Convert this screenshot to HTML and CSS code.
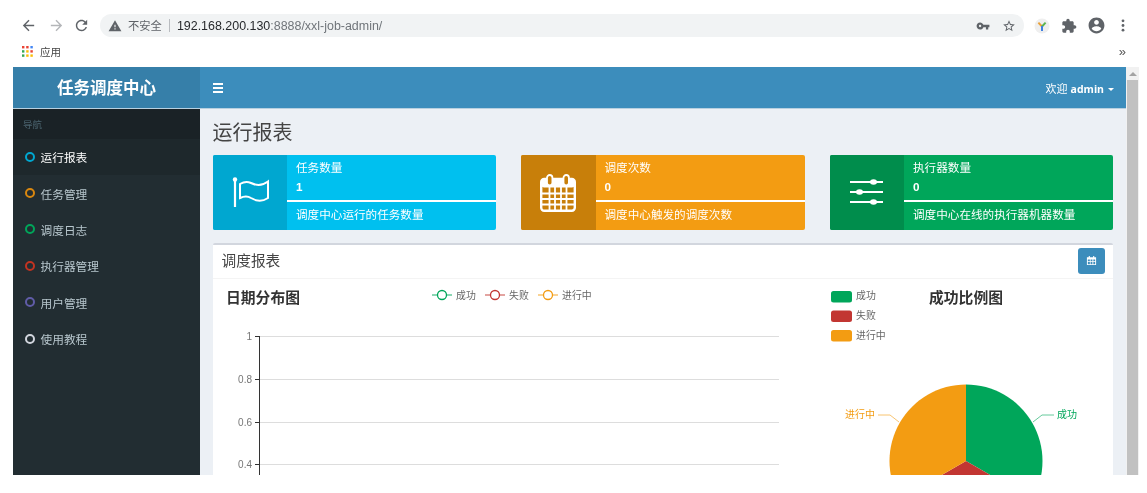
FILE: index.html
```html
<!DOCTYPE html>
<html lang="zh-CN">
<head>
<meta charset="utf-8">
<title>任务调度中心</title>
<link rel="stylesheet" href="styles.css">
</head>
<body>
<div class="browser">
  <div class="toolbar">
    <svg class="tb-icon" viewBox="0 0 24 24"><path fill="#5f6368" d="M20 11H7.83l5.59-5.59L12 4l-8 8 8 8 1.41-1.41L7.83 13H20v-2z"/></svg>
    <svg class="tb-icon" viewBox="0 0 24 24"><path fill="#b4b6b9" d="M12 4l-1.41 1.41L16.17 11H4v2h12.17l-5.58 5.59L12 20l8-8z"/></svg>
    <svg class="tb-icon" viewBox="0 0 24 24"><path fill="#5f6368" d="M17.65 6.35C16.2 4.9 14.21 4 12 4c-4.42 0-7.99 3.58-7.99 8s3.57 8 7.99 8c3.73 0 6.84-2.55 7.73-6h-2.08c-.82 2.33-3.04 4-5.65 4-3.31 0-6-2.69-6-6s2.69-6 6-6c1.66 0 3.14.69 4.22 1.78L13 11h7V4l-2.35 2.35z"/></svg>
    <div class="omnibox">
      <svg class="warn" viewBox="0 0 24 24"><path fill="#5f6368" d="M1 21h22L12 2 1 21zm12-3h-2v-2h2v2zm0-4h-2v-4h2v4z"/></svg>
      <span class="insecure">不安全</span>
      <span class="sep"></span>
      <span class="url"><span class="host">192.168.200.130</span>:8888/xxl-job-admin/</span>
      <span class="omni-actions">
        <svg class="om-icon" viewBox="0 0 24 24"><path fill="#5f6368" d="M12.65 10C11.83 7.67 9.61 6 7 6c-3.31 0-6 2.69-6 6s2.69 6 6 6c2.61 0 4.83-1.67 5.65-4H17v4h4v-4h2v-4H12.65zM7 14c-1.1 0-2-.9-2-2s.9-2 2-2 2 .9 2 2-.9 2-2 2z"/></svg>
        <svg class="om-icon" viewBox="0 0 24 24"><path fill="#5f6368" d="M22 9.24l-7.19-.62L12 2 9.19 8.63 2 9.24l5.46 4.73L5.82 21 12 17.27 18.18 21l-1.63-7.03L22 9.24zM12 15.4l-3.76 2.27 1-4.28-3.32-2.88 4.38-.38L12 6.1l1.71 4.04 4.38.38-3.32 2.88 1 4.28L12 15.4z"/></svg>
      </span>
    </div>
    <div class="extensions">
      <svg class="ext" viewBox="0 0 16 16"><circle cx="8" cy="8" r="7.5" fill="#efefef"/><path d="M8 8.5L4.4 4.6" stroke="#e9a23b" stroke-width="2" fill="none"/><path d="M8 8.5l3.6-3.9" stroke="#5bb450" stroke-width="2" fill="none"/><path d="M8 8v5" stroke="#3f7fe0" stroke-width="2" fill="none"/></svg>
      <svg class="ext" viewBox="0 0 24 24"><path fill="#5f6368" d="M20.5 11H19V7c0-1.1-.9-2-2-2h-4V3.5C13 2.12 11.88 1 10.5 1S8 2.12 8 3.5V5H4c-1.1 0-1.99.9-1.99 2v3.8H3.5c1.49 0 2.7 1.21 2.7 2.7s-1.21 2.7-2.7 2.7H2V20c0 1.1.9 2 2 2h3.8v-1.5c0-1.49 1.21-2.7 2.7-2.7 1.49 0 2.7 1.21 2.7 2.7V22H17c1.1 0 2-.9 2-2v-4h1.5c1.38 0 2.5-1.12 2.5-2.5S21.88 11 20.5 11z"/></svg>
      <svg class="ext profile" viewBox="0 0 24 24"><path fill="#5f6368" d="M12 2C6.48 2 2 6.48 2 12s4.48 10 10 10 10-4.48 10-10S17.52 2 12 2zm0 3c1.66 0 3 1.34 3 3s-1.34 3-3 3-3-1.34-3-3 1.34-3 3-3zm0 14.2c-2.5 0-4.71-1.28-6-3.22.03-1.99 4-3.08 6-3.08 1.99 0 5.97 1.09 6 3.08-1.29 1.94-3.5 3.22-6 3.22z"/></svg>
      <svg class="ext dots" viewBox="0 0 4 13"><circle cx="2" cy="1.800" r="1.400" fill="#5f6368"/><circle cx="2" cy="6.500" r="1.400" fill="#5f6368"/><circle cx="2" cy="11.200" r="1.400" fill="#5f6368"/></svg>
    </div>
  </div>
  <div class="bookmarks">
    <svg class="apps" viewBox="0 0 11 11">
      <rect x="0" y="0" width="2.4" height="2.4" fill="#ea4335"/><rect x="4.2" y="0" width="2.4" height="2.4" fill="#ea4335"/><rect x="8.4" y="0" width="2.4" height="2.4" fill="#4285f4"/>
      <rect x="0" y="4.2" width="2.4" height="2.4" fill="#34a853"/><rect x="4.2" y="4.2" width="2.4" height="2.4" fill="#fbbc05"/><rect x="8.4" y="4.2" width="2.4" height="2.4" fill="#ea4335"/>
      <rect x="0" y="8.4" width="2.4" height="2.4" fill="#34a853"/><rect x="4.2" y="8.4" width="2.4" height="2.4" fill="#fbbc05"/><rect x="8.4" y="8.4" width="2.4" height="2.4" fill="#fbbc05"/>
    </svg>
    <span class="apps-label">应用</span>
    <span class="more">»</span>
  </div>
</div>

<div class="frame">
  <div class="app">
    <header class="topbar">
      <div class="logo">任务调度中心</div>
      <div class="navbar">
        <span class="burger"><i></i><i></i><i></i></span>
        <span class="user">欢迎 <b>admin</b><span class="caret"></span></span>
      </div>
    </header>
    <div class="layout">
      <aside class="sidebar">
        <div class="side-head">导航</div>
        <ul class="menu">
          <li class="menu-item active"><span class="dot c-blue"></span>运行报表</li>
          <li class="menu-item"><span class="dot c-orange"></span>任务管理</li>
          <li class="menu-item"><span class="dot c-green"></span>调度日志</li>
          <li class="menu-item"><span class="dot c-red"></span>执行器管理</li>
          <li class="menu-item"><span class="dot c-purple"></span>用户管理</li>
          <li class="menu-item"><span class="dot c-gray"></span>使用教程</li>
        </ul>
      </aside>
      <main class="content">
        <h1 class="page-title">运行报表</h1>
        <div class="cards">
          <section class="card card-blue">
            <div class="card-icon">
              <svg class="ic-flag" viewBox="0 0 40 32"><circle cx="5" cy="2.500" r="2.200" fill="#fff"/><path d="M5 3v27" stroke="#fff" stroke-width="2.200" fill="none"/><path d="M10 7C14 4.500 18 4.500 21 6C26 8.500 32 9 38 4.500V21C32 25 26 24 21 21C18 19 14 19 10 21Z" stroke="#fff" stroke-width="2" fill="none"/></svg>
            </div>
            <div class="card-body">
              <div class="card-label">任务数量</div>
              <div class="card-num">1</div>
              <div class="card-bar"></div>
              <div class="card-desc">调度中心运行的任务数量</div>
            </div>
          </section>
          <section class="card card-orange">
            <div class="card-icon">
              <svg class="ic-cal" viewBox="0 0 36 38"><rect x="1.200" y="5" width="33.600" height="31.800" rx="3" fill="none" stroke="#fff" stroke-width="2.400"/><rect x="1.200" y="5" width="33.600" height="8.500" rx="3" fill="#fff"/><rect x="7" y="1" width="5.400" height="10.500" rx="2.700" fill="#c87f0a" stroke="#fff" stroke-width="1.800"/><rect x="23.500" y="1" width="5.400" height="10.500" rx="2.700" fill="#c87f0a" stroke="#fff" stroke-width="1.800"/><path d="M2 19.500h32M2 25h32M2 30.500h32M9.500 13v23M15 13v23M21 13v23M26.500 13v23" stroke="#fff" stroke-width="1.800" fill="none"/></svg>
            </div>
            <div class="card-body">
              <div class="card-label">调度次数</div>
              <div class="card-num">0</div>
              <div class="card-bar"></div>
              <div class="card-desc">调度中心触发的调度次数</div>
            </div>
          </section>
          <section class="card card-green">
            <div class="card-icon">
              <svg class="ic-sliders" viewBox="0 0 34 26"><path d="M0 3h33M0 13h33M0 23h33" stroke="#fff" stroke-width="2" fill="none"/><ellipse cx="23.500" cy="3" rx="3.500" ry="2.700" fill="#fff"/><ellipse cx="9.500" cy="13" rx="3.500" ry="2.700" fill="#fff"/><ellipse cx="23.500" cy="23" rx="3.500" ry="2.700" fill="#fff"/></svg>
            </div>
            <div class="card-body">
              <div class="card-label">执行器数量</div>
              <div class="card-num">0</div>
              <div class="card-bar"></div>
              <div class="card-desc">调度中心在线的执行器机器数量</div>
            </div>
          </section>
        </div>
        <section class="box">
          <div class="box-head">
            <h2 class="box-title">调度报表</h2>
            <button class="cal-btn" type="button">
              <svg viewBox="0 0 12 12"><path fill="#fff" d="M1 2.500h2V1h1.200v1.500h3.600V1H9v1.500h2V11H1zM2 5v1.700h2.200V5zm3 0v1.700h2V5zm3 0v1.700h2V5zM2 7.500v2.500h2.200V7.500zm3 0v2.500h2V7.500zm3 0v2.500h2V7.500z"/></svg>
            </button>
          </div>
          <div class="charts">
            <svg class="chart chart-line" viewBox="0 0 600 260">
              <text class="c-title" x="13" y="23.500">日期分布图</text>
              <g class="lg-line">
                <path d="M219 16h20" stroke="#00a65a" opacity=".7"/><circle cx="229" cy="16" r="4.500" fill="#fff" stroke="#00a65a"/>
                <path d="M272 16h20" stroke="#c23632" opacity=".7"/><circle cx="282" cy="16" r="4.500" fill="#fff" stroke="#c23632"/>
                <path d="M325 16h20" stroke="#f39c12" opacity=".7"/><circle cx="335" cy="16" r="4.500" fill="#fff" stroke="#f39c12"/>
              </g>
              <text class="lg-text" x="243" y="19.500">成功</text>
              <text class="lg-text" x="296" y="19.500">失败</text>
              <text class="lg-text" x="349" y="19.500">进行中</text>
              <g class="grid">
                <path d="M47 57.500h519M47 100.500h519M47 143.500h519M47 185.500h519M47 228.500h519"/>
              </g>
              <path class="axis" d="M46.500 57v203M42 57.500h5M42 100.500h5M42 143.500h5M42 185.500h5M42 228.500h5"/>
              <text class="tick" x="39" y="60.500">1</text>
              <text class="tick" x="39" y="103.500">0.8</text>
              <text class="tick" x="39" y="146.500">0.6</text>
              <text class="tick" x="39" y="188.500">0.4</text>
            </svg>
            <svg class="chart chart-pie" viewBox="0 0 300 260">
              <rect x="18" y="12" width="21" height="11.500" rx="2.500" fill="#00a65a"/>
              <rect x="18" y="31.500" width="21" height="11.500" rx="2.500" fill="#c23632"/>
              <rect x="18" y="51" width="21" height="11.500" rx="2.500" fill="#f39c12"/>
              <text class="lg-text" x="43" y="20">成功</text>
              <text class="lg-text" x="43" y="39.500">失败</text>
              <text class="lg-text" x="43" y="59.500">进行中</text>
              <text class="c-title" x="116" y="23.500">成功比例图</text>
              <path d="M153 182V105.500A76.500 76.500 0 0 1 219.250 220.250z" fill="#00a65a"/>
              <path d="M153 182L219.250 220.250A76.500 76.500 0 0 1 86.750 220.250z" fill="#c23632"/>
              <path d="M153 182L86.750 220.250A76.500 76.500 0 0 1 153 105.500z" fill="#f39c12"/>
              <path d="M220 143l9-7h12" stroke="#00a65a" stroke-width="1" fill="none" opacity=".6"/>
              <path d="M86 143l-9-7H65" stroke="#f39c12" stroke-width="1" fill="none" opacity=".6"/>
              <text class="pie-label" x="244" y="139" fill="#00a65a">成功</text>
              <text class="pie-label" x="32" y="139" fill="#f39c12">进行中</text>
            </svg>
          </div>
        </section>
      </main>
    </div>
  </div>
  <div class="scrollbar">
    <span class="arrow"></span>
    <span class="thumb"></span>
  </div>
</div>
</body>
</html>
```
FILE: styles.css
```css
* { box-sizing: border-box; }
html, body { margin: 0; padding: 0; background: #fff; }
body {
  width: 1147px;
  height: 493px;
  overflow: hidden;
  font-family: "Liberation Sans", "Noto Sans CJK SC", sans-serif;
  filter: blur(0.55px);
}
.browser { height: 67px; background: #fff; }
.toolbar {
  height: 42px;
  padding: 14px 0 0 20px;
  display: flex;
  align-items: flex-start;
}
.tb-icon { width: 17px; height: 17px; margin: 3px 11px 0 0; flex: none; }
.tb-icon:nth-child(2) { margin-right: 8px; }
.tb-icon:nth-child(3) { margin-right: 10px; }
.omnibox {
  width: 924px;
  height: 23px;
  border-radius: 12px;
  background: #f1f3f4;
  display: flex;
  align-items: center;
  padding-left: 8px;
  font-size: 12px;
}
.warn { width: 14px; height: 14px; flex: none; }
.insecure { margin: 0 0 2px 6px; color: #5f6368; font-size: 11.300px; }
.sep { width: 1px; height: 13px; background: #b9bcc0; margin: 0 7px; }
.url { color: #70757a; font-size: 12.450px; }
.host { color: #27292c; }
.omni-actions { margin-left: auto; display: flex; gap: 12px; align-items: center; padding-right: 8px; }
.om-icon { width: 14px; height: 14px; }
.extensions { display: flex; align-items: center; height: 23px; margin-left: 10px; }
.ext { width: 16px; height: 16px; margin-right: 11px; flex: none; }
.ext.profile { width: 19px; height: 19px; margin-right: 15px; margin-left: -1px; }
.ext.dots { width: 4px; height: 13px; margin: 0; }
.bookmarks {
  height: 25px;
  display: flex;
  align-items: center;
  padding: 0 0 6px 22px;
}
.apps { width: 11px; height: 11px; }
.apps-label { margin-left: 7px; font-size: 10.500px; color: #444; }
.more { margin-left: auto; margin-right: 21px; font-size: 13px; color: #555; }

.frame {
  width: 1126px;
  height: 408px;
  margin-left: 13px;
  display: flex;
  overflow: hidden;
  background: #ecf0f5;
}
.app { width: 1113px; flex: none; display: flex; flex-direction: column; }
.topbar { height: 42px; display: flex; flex: none; border-bottom: 1px solid #b8d0e0; }
.logo {
  width: 187px;
  background: #367fa9;
  color: #fff;
  font-weight: 700;
  font-size: 16.500px;
  text-align: center;
  line-height: 42px;
}
.navbar {
  flex: 1;
  background: #3c8dbc;
  display: flex;
  align-items: center;
  justify-content: space-between;
  padding: 0 12px 0 13px;
}
.burger { width: 10px; display: flex; flex-direction: column; gap: 2px; }
.burger i { display: block; height: 2px; background: #fff; }
.user { color: #fff; font-size: 11px; }
.user b { font-weight: 700; font-family: "Open Sans", sans-serif; font-size: 10.500px; }
.caret {
  display: inline-block;
  margin-left: 4px;
  vertical-align: middle;
  border-top: 3px solid #fff;
  border-left: 3px solid transparent;
  border-right: 3px solid transparent;
}
.layout { flex: 1; display: flex; min-height: 0; }
.sidebar { width: 187px; flex: none; background: #222d32; }
.side-head {
  height: 29.500px;
  padding-left: 10px;
  background: #1a2226;
  color: #4b646f;
  font-size: 9.500px;
  line-height: 31px;
}
.menu { list-style: none; margin: 0; padding: 0; }
.menu-item {
  height: 36.400px;
  display: flex;
  align-items: center;
  padding-left: 12px;
  color: #b8c7ce;
  font-size: 11.700px;
}
.menu-item.active { background: #1e282c; color: #fff; }
.dot {
  width: 10px;
  height: 10px;
  border-radius: 50%;
  border: 2px solid;
  margin-right: 5.500px;
  flex: none;
}
.c-blue { border-color: #00a7d0; }
.c-orange { border-color: #d9870f; }
.c-green { border-color: #00a65a; }
.c-red { border-color: #c23321; }
.c-purple { border-color: #605ca8; }
.c-gray { border-color: #d2d6de; }

.content { flex: 1; min-width: 0; padding: 0 13px 0 12.500px; }
.page-title {
  margin: 0;
  height: 46px;
  padding-top: 11px;
  font-size: 20px;
  line-height: 27px;
  font-weight: 400;
  color: #444;
}
.cards { display: flex; justify-content: space-between; }
.card {
  width: 283.500px;
  height: 75px;
  display: flex;
  border-radius: 2px;
  color: #fff;
  overflow: hidden;
}
.card-blue { background: #00c0ef; }
.card-orange { background: #f39c12; }
.card-green { background: #00a65a; }
.card-icon {
  width: 74.500px;
  flex: none;
  display: flex;
  align-items: center;
  justify-content: center;
}
.card-blue .card-icon { background: #00a7d0; }
.card-orange .card-icon { background: #c87f0a; }
.card-green .card-icon { background: #008d4c; }
.ic-flag { width: 40px; height: 32px; }
.ic-cal { width: 36px; height: 38px; }
.ic-sliders { width: 34px; height: 26px; margin: 0 0 2px 1px; }
.card-body { flex: 1; min-width: 0; }
.card-label { padding: 5px 0 0 9px; height: 24px; font-size: 11.600px; line-height: 16px; }
.card-num { padding-left: 9px; height: 21px; font-size: 11.700px; font-weight: 700; line-height: 16px; }
.card-bar { height: 2px; background: #fff; }
.card-desc { padding: 5px 0 0 9px; font-size: 11.600px; line-height: 16px; }

.box {
  margin-top: 13px;
  background: #fff;
  border-top: 2px solid #d2d6de;
  border-radius: 2px;
}
.box-head {
  height: 34px;
  display: flex;
  align-items: center;
  justify-content: space-between;
  padding: 0 8px 0 9px;
  border-bottom: 1px solid #f4f4f4;
}
.box-title { margin: 0 0 5px; font-size: 14.700px; font-weight: 400; color: #444; }
.cal-btn {
  width: 27px;
  height: 26px;
  padding: 0;
  margin-bottom: 2px;
  border: 0;
  border-radius: 3px;
  background: #3c8dbc;
  display: flex;
  align-items: center;
  justify-content: center;
}
.cal-btn svg { width: 11px; height: 11px; }
.charts { display: flex; }
.chart { display: block; flex: none; height: 260px; }
.chart-line { width: 600px; }
.chart-pie { width: 300px; }
.chart text { font-family: "Liberation Sans", "Noto Sans CJK SC", sans-serif; }
.c-title { font-size: 14.800px; font-weight: 700; fill: #333; }
.lg-text { font-size: 9.900px; fill: #666; }
.lg-line path, .lg-line circle { stroke-width: 1.300; }
.grid path { stroke: #ddd; stroke-width: 1; fill: none; }
.axis { stroke: #333; stroke-width: 1; fill: none; }
.tick { font-size: 10px; fill: #777; text-anchor: end; }
.pie-label { font-size: 10px; }

.scrollbar { width: 13px; flex: none; background: #f1f1f1; display: flex; flex-direction: column; align-items: center; }
.arrow {
  margin: 5px 0 4px;
  border-bottom: 4px solid #a3a3a3;
  border-left: 4px solid transparent;
  border-right: 4px solid transparent;
}
.thumb { width: 11px; flex: 1; background: #c1c1c1; }
```
